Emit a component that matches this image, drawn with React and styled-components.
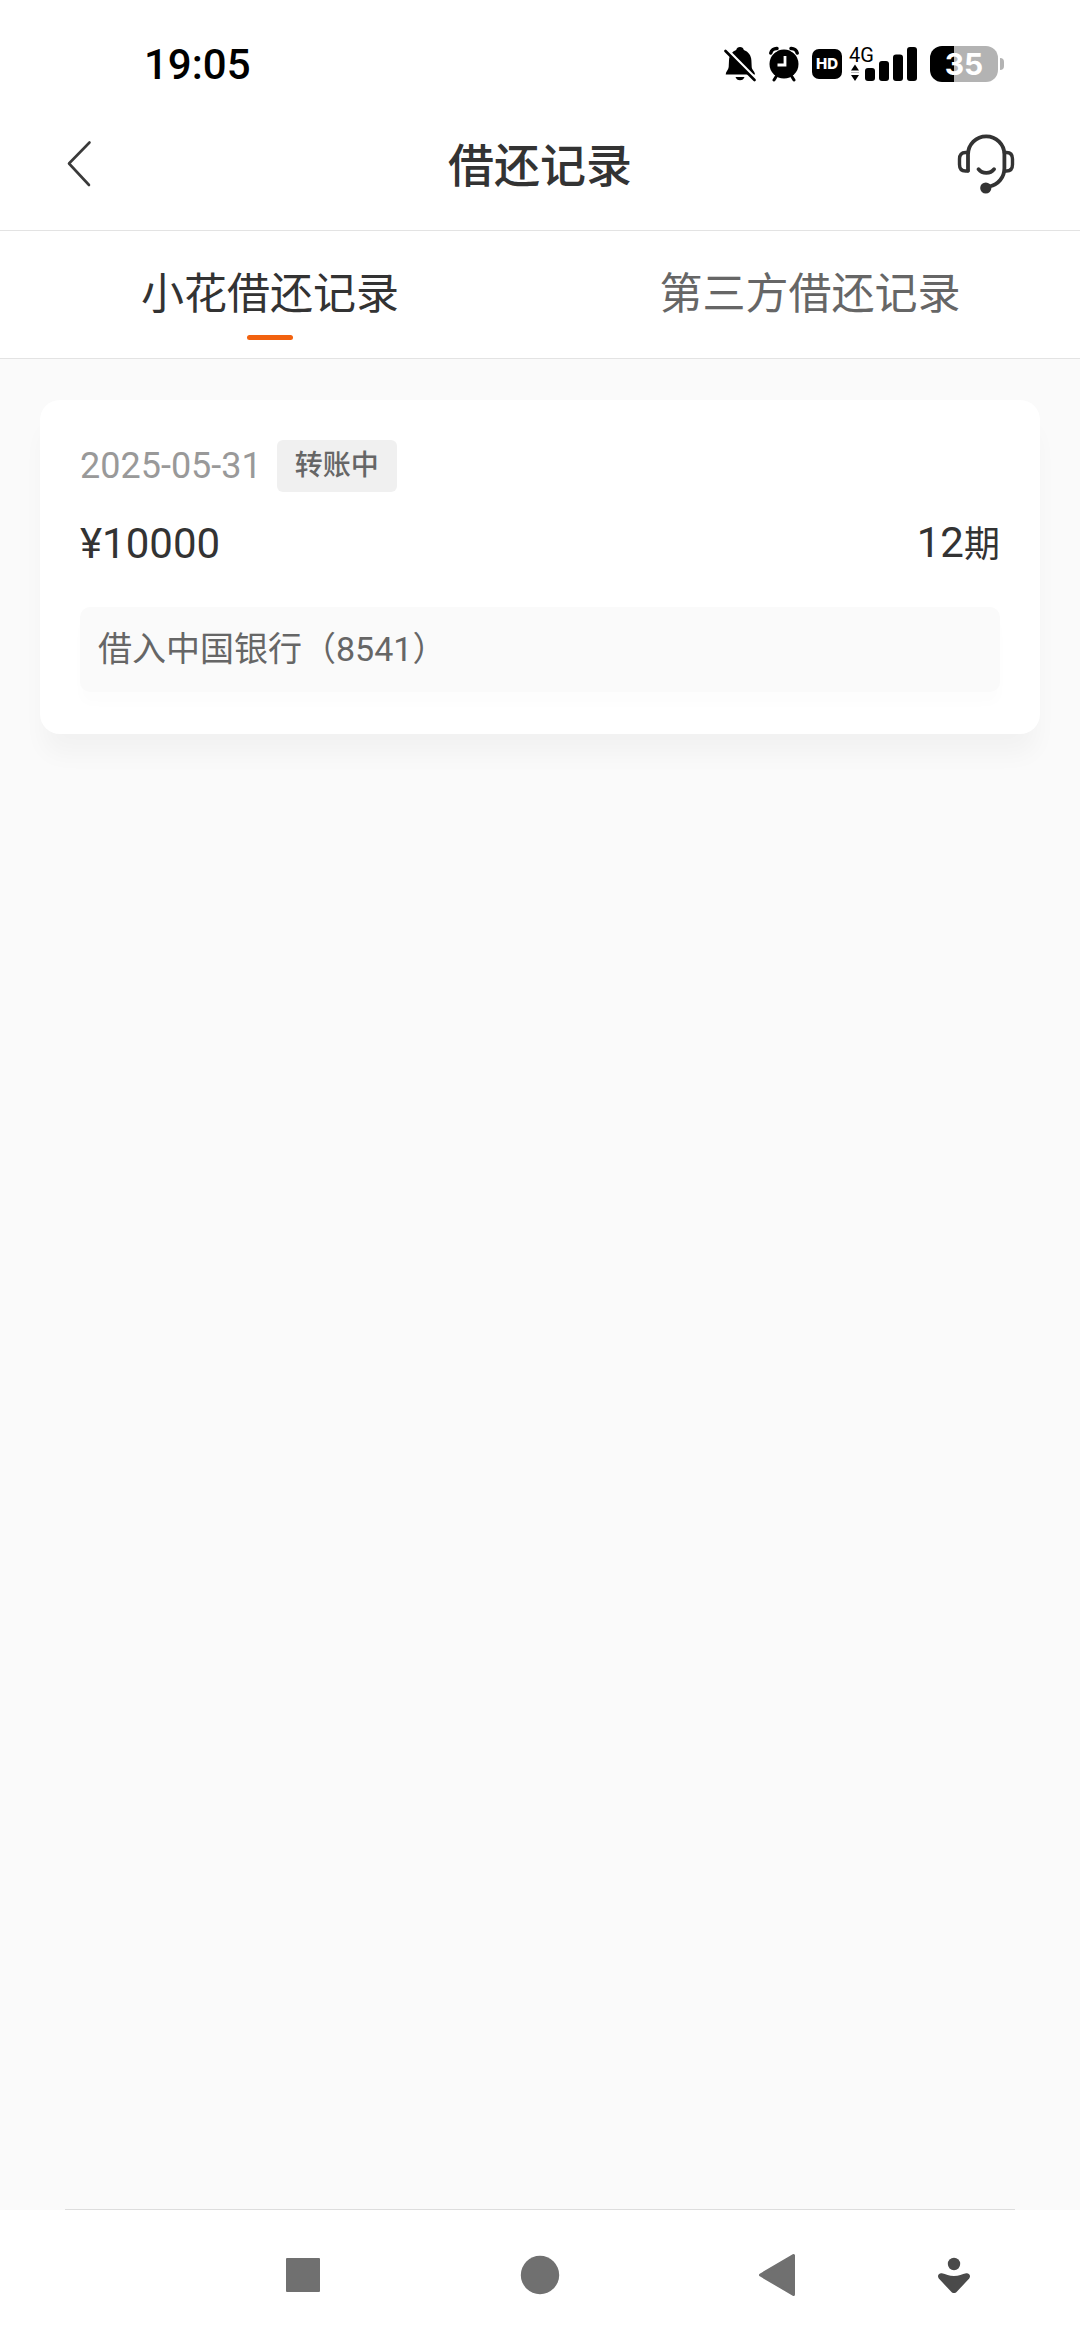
import React, { useState } from "react";
import styled, { createGlobalStyle } from "styled-components";

const GlobalStyle = createGlobalStyle`
  * { box-sizing: border-box; }
  body {
    margin: 0;
    background: #fafafa;
    color: #333;
    font-family: Roboto, "Noto Sans CJK SC", sans-serif;
  }
  button {
    margin: 0;
    padding: 0;
    border: 0;
    background: none;
    color: inherit;
    font: inherit;
    cursor: pointer;
  }
  svg { display: block; }
`;

const Screen = styled.div`
  display: flex;
  flex-direction: column;
  min-height: 100vh;
`;

const StatusBar = styled.div`
  display: flex;
  align-items: center;
  justify-content: space-between;
  height: 98px;
  padding: 30px 76px 0 144px;
  background: #fff;
  color: #000;
`;

const Clock = styled.time`
  padding-top: 2px;
  font-size: 42px;
  line-height: 50px;
  font-weight: 500;
`;

const StatusIcons = styled.div`
  display: flex;
  align-items: center;
  gap: 13px;
`;

const NetworkGroup = styled.div`
  display: flex;
  align-items: center;
  gap: 7px;
`;

const HdBadge = styled.span`
  width: 30px;
  height: 30px;
  border-radius: 7px;
  background: #000;
  color: #fff;
  font-family: Inter, sans-serif;
  font-size: 15px;
  line-height: 30px;
  font-weight: 800;
  text-align: center;
`;

const Battery = styled.div`
  display: flex;
  align-items: center;
  gap: 2px;
`;

const BatteryBody = styled.span`
  width: 68px;
  height: 36px;
  border-radius: 12px;
  background: linear-gradient(to right, #000 ${(p) => p.$level}%, #b3b3b3 ${(p) => p.$level}%);
  color: #fff;
  font-family: Inter, sans-serif;
  font-size: 30px;
  line-height: 36px;
  font-weight: 700;
  text-align: center;
`;

const BatteryTip = styled.span`
  width: 4px;
  height: 12px;
  border-radius: 0 4px 4px 0;
  background: #b3b3b3;
`;

const Header = styled.header`
  display: grid;
  grid-template-columns: 1fr auto 1fr;
  align-items: center;
  height: 133px;
  padding: 0 64px;
  border-bottom: 1px solid #e3e3e3;
  background: #fff;
`;

const Title = styled.h1`
  margin: 0;
  padding-top: 4px;
  font-size: 46px;
  line-height: 60px;
  font-weight: 500;
`;

const HeaderButton = styled.button`
  justify-self: ${(p) => p.$side};
`;

const Tabs = styled.div`
  display: grid;
  grid-template-columns: 1fr 1fr;
  border-bottom: 1px solid #e3e3e3;
  background: #fff;
`;

const Tab = styled.button`
  display: flex;
  flex-direction: column;
  align-items: center;
  gap: 11px;
  padding: 33px 0 18px;
  color: ${(p) => (p.$active ? "#333" : "#666")};
  font-size: 43px;
  line-height: 60px;

  &::after {
    content: "";
    width: 46px;
    height: 5px;
    border-radius: 3px;
    background: ${(p) => (p.$active ? "#f2620f" : "transparent")};
  }
`;

const Content = styled.main`
  flex: 1;
  padding: 41px 40px;
`;

const Card = styled.article`
  padding: 40px 40px 42px;
  border-radius: 20px;
  background: #fff;
  box-shadow: 0 24px 24px -4px rgba(0, 0, 0, 0.035);
`;

const MetaRow = styled.div`
  display: flex;
  align-items: center;
  gap: 15px;
`;

const RecordDate = styled.time`
  color: #999;
  font-size: 36px;
  line-height: 50px;
`;

const Tag = styled.span`
  padding: 0 18px;
  border-radius: 6px;
  background: #f0f0f0;
  color: #666;
  font-size: 28px;
  line-height: 52px;
  font-weight: 500;
`;

const AmountRow = styled.div`
  display: flex;
  align-items: center;
  justify-content: space-between;
  height: 50px;
  margin: 27px 0 38px;
  font-size: 42px;
  line-height: 50px;
`;

const Unit = styled.span`
  font-size: 36px;
`;

const Note = styled.p`
  margin: 0;
  padding: 18px;
  border-radius: 10px;
  background: #fafafa;
  box-shadow: 0 12px 12px rgba(0, 0, 0, 0.01);
  color: #666;
  font-size: 34px;
  line-height: 49px;
`;

const NavBar = styled.nav`
  display: grid;
  grid-template-columns: 184fr 237fr 237fr 237fr 117fr 68fr;
  height: 130px;
  background: #fff;

  &::before {
    content: "";
  }
`;

const NavDivider = styled.hr`
  width: 88%;
  height: 1px;
  margin: 0 auto;
  border: 0;
  background: #ddd;
`;

const NavButton = styled.button`
  display: grid;
  place-items: center;
  color: ${(p) => (p.$dark ? "#4a4a4a" : "#707070")};
`;

function BellOffIcon() {
  return (
    <svg width="32" height="36" viewBox="0 0 32 36" aria-hidden="true">
      <path
        d="M16 1c2 0 3.500 1.300 3.800 3.100 4.500 1.500 7.400 5.400 7.600 10.400l.3 6.500c.1 2.800 3.300 4.500 3.300 7.500H1.700c0-3 2.800-4.500 3-7.500l.3-6.500c.2-5 3-8.900 7.200-10.400C12.600 2.300 14 1 16 1z"
        fill="#000"
      />
      <path d="M11.500 31h9c-.6 2-2.300 3.300-4.500 3.300S12.100 33 11.500 31z" fill="#000" />
      <path d="M3 3.500 32 33" stroke="#fff" strokeWidth="3" />
      <path d="M1.500 5 30.500 34" stroke="#000" strokeWidth="2.600" strokeLinecap="round" />
    </svg>
  );
}

function AlarmIcon() {
  return (
    <svg width="30" height="36" viewBox="0 0 30 36" aria-hidden="true">
      <circle cx="15" cy="18" r="14.500" fill="#000" />
      <path d="M1.500 7.500C2 4.500 5 2 8.500 2.500M28.500 7.500C28 4.500 25 2 21.500 2.500" stroke="#fff" strokeWidth="6" fill="none" />
      <path d="M1.800 7C2.300 4.500 5 2.300 8 2.500M28.200 7C27.700 4.500 25 2.300 22 2.500" stroke="#000" strokeWidth="3.500" strokeLinecap="round" fill="none" />
      <path d="M7.500 30 5 34M22.500 30 25 34" stroke="#000" strokeWidth="3" strokeLinecap="round" />
      <path d="M16 10v9H8.500" stroke="#fff" strokeWidth="2.800" fill="none" />
    </svg>
  );
}

function SignalIcon() {
  return (
    <svg width="68" height="36" viewBox="0 0 68 36" overflow="visible" role="img">
      <text x="0" y="16" fontFamily="Roboto, sans-serif" fontSize="20">4G</text>
      <path d="M2 24.500 6 18.500 10 24.500zM2 29 6 35 10 29z" fill="#000" />
      <rect x="2" y="26" width="8" height="1" fill="#bbb" />
      <rect x="16" y="22" width="10" height="13" rx="3" />
      <rect x="30" y="15" width="10" height="20" rx="3" />
      <rect x="44" y="8.500" width="10" height="26.500" rx="3" />
      <rect x="58" y="1" width="10" height="34" rx="3" />
    </svg>
  );
}

function BackIcon() {
  return (
    <svg width="30" height="50" viewBox="0 0 30 50" aria-hidden="true">
      <path d="M25.500 3.500 5 24.500 25 46" fill="none" stroke="#3a3a3a" strokeWidth="2.600" strokeLinecap="round" strokeLinejoin="round" />
    </svg>
  );
}

function HeadsetIcon() {
  return (
    <svg width="60" height="60" viewBox="0 0 60 60" fill="none" stroke="#333" strokeWidth="3.800" strokeLinecap="round" aria-hidden="true">
      <path d="M12 36.500V20.500a18.200 18.200 0 0 1 36.400 0V34c0 9.500-6 16.500-15 18.500" />
      <path d="M12 18.500H9.500Q3.500 18.500 3.500 25v5.500Q3.500 37 9.500 37H12" strokeWidth="3.400" />
      <path d="M48.500 18.500H50.500Q56.500 18.500 56.500 25v5.500Q56.500 37 50.500 37H48.500" strokeWidth="3.400" />
      <path d="M22.500 35.200c3.800 5 11.800 5 15.600 0" />
      <circle cx="29.800" cy="54" r="5.600" fill="#333" stroke="none" />
    </svg>
  );
}

function RecentIcon() {
  return (
    <svg width="34" height="34" viewBox="0 0 34 34" fill="currentColor" aria-hidden="true">
      <rect width="34" height="34" rx="1" />
    </svg>
  );
}

function HomeIcon() {
  return (
    <svg width="40" height="40" viewBox="0 0 40 40" fill="currentColor" aria-hidden="true">
      <circle cx="20" cy="20" r="19.200" />
    </svg>
  );
}

function TriangleIcon() {
  return (
    <svg width="38" height="44" viewBox="0 0 38 44" fill="currentColor" stroke="currentColor" strokeWidth="3" strokeLinejoin="round" aria-hidden="true">
      <path d="M35.500 2.500v39L2.500 22z" />
    </svg>
  );
}

function PersonIcon() {
  return (
    <svg width="34" height="38" viewBox="0 0 34 38" fill="currentColor" aria-hidden="true">
      <circle cx="17" cy="8" r="6.200" />
      <path d="M4.800 17.200C9 18 12 20 17 20s8-2 12.200-2.800c3-.4 5 2.600 3 5.200L20 35.600c-1.700 2-4.300 2-6 0L1.800 22.400c-2-2.600 0-5.600 3-5.200z" />
    </svg>
  );
}

const TABS = ["小花借还记录", "第三方借还记录"];

const RECORDS = [
  { date: "2025-05-31", status: "转账中", amount: "¥10000", periods: 12, note: "借入中国银行（8541）" },
];

export default function App() {
  const [active, setActive] = useState(0);

  return (
    <Screen>
      <GlobalStyle />
      <StatusBar>
        <Clock>19:05</Clock>
        <StatusIcons>
          <BellOffIcon />
          <AlarmIcon />
          <NetworkGroup>
            <HdBadge>HD</HdBadge>
            <SignalIcon />
          </NetworkGroup>
          <Battery>
            <BatteryBody $level={35}>35</BatteryBody>
            <BatteryTip />
          </Battery>
        </StatusIcons>
      </StatusBar>

      <Header>
        <HeaderButton $side="start" aria-label="返回"><BackIcon /></HeaderButton>
        <Title>借还记录</Title>
        <HeaderButton $side="end" aria-label="客服"><HeadsetIcon /></HeaderButton>
      </Header>

      <Tabs role="tablist">
        {TABS.map((label, i) => (
          <Tab key={label} role="tab" aria-selected={i === active} $active={i === active} onClick={() => setActive(i)}>
            {label}
          </Tab>
        ))}
      </Tabs>

      <Content>
        {RECORDS.map((r) => (
          <Card key={r.date}>
            <MetaRow>
              <RecordDate>{r.date}</RecordDate>
              <Tag>{r.status}</Tag>
            </MetaRow>
            <AmountRow>
              <span>{r.amount}</span>
              <span>{r.periods}<Unit>期</Unit></span>
            </AmountRow>
            <Note>{r.note}</Note>
          </Card>
        ))}
      </Content>

      <NavDivider />
      <NavBar>
        <NavButton aria-label="最近任务"><RecentIcon /></NavButton>
        <NavButton aria-label="主屏幕"><HomeIcon /></NavButton>
        <NavButton aria-label="返回上一页"><TriangleIcon /></NavButton>
        <NavButton $dark aria-label="快捷菜单"><PersonIcon /></NavButton>
      </NavBar>
    </Screen>
  );
}
